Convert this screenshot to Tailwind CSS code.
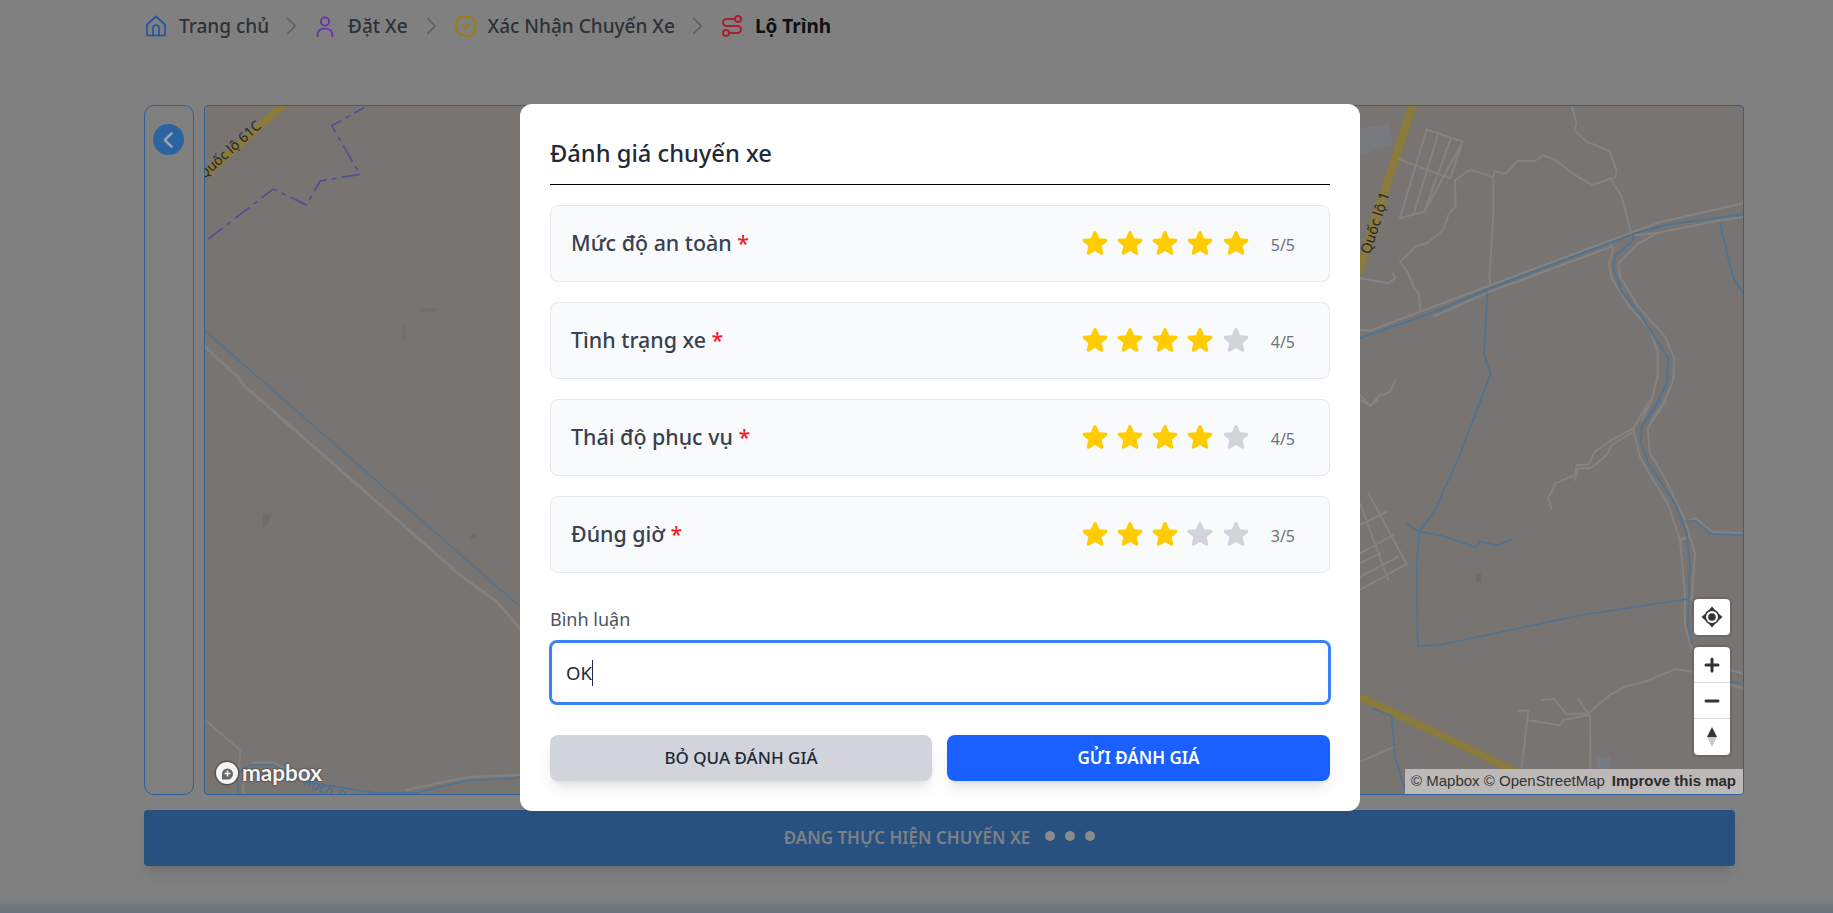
<!DOCTYPE html>
<html lang="en">

<head>
    <meta charset="UTF-8">
    <meta name="viewport" content="width=device-width, initial-scale=1.0">
    <title>Đánh giá chuyến xe</title>
    <script src="https://cdn.jsdelivr.net/npm/@tailwindcss/browser@4"></script>
</head>

<body class="bg-[#808080] font-['Noto_Sans',sans-serif] overflow-hidden">
    <svg class="hidden"><symbol id="star" viewBox="0 0 24 24"><path fill="currentColor" d="M10.788 3.21c.448-1.077 1.976-1.077 2.424 0l2.082 5.006 5.404.434c1.164.093 1.636 1.545.749 2.305l-4.117 3.527 1.257 5.273c.271 1.136-.964 2.033-1.96 1.425L12 18.354 7.373 21.18c-.996.608-2.231-.29-1.96-1.425l1.257-5.273-4.117-3.527c-.887-.76-.415-2.212.749-2.305l5.404-.434 2.082-5.005Z" /></symbol></svg>

    <div class="relative w-[1833px] h-[913px] pl-[144px] overflow-hidden">

        <!-- Breadcrumb -->
        <nav class="flex items-center h-[52px] text-[19px] text-[#2d3137] font-medium">
            <svg class="w-[24px] h-[24px] text-[#1f55a6]" viewBox="0 0 24 24" fill="none" stroke="currentColor" stroke-width="1.7" stroke-linejoin="round" stroke-linecap="round"><path d="M3 10.500 12 2.500l9 8V21.500H3z" /><path d="M9 21.500V14a3 3 0 0 1 6 0v7.500" /></svg>
            <span class="ml-[11px]">Trang chủ</span>
            <svg class="w-[20px] h-[20px] ml-[12px] mr-[13px] text-[#5a5d62]" viewBox="0 0 24 24" fill="none" stroke="currentColor" stroke-width="1.8" stroke-linecap="round" stroke-linejoin="round"><path d="m8 3 9 9-9 9" /></svg>
            <svg class="w-[22px] h-[22px] text-[#6a2eab]" viewBox="0 0 24 24" fill="none" stroke="currentColor" stroke-width="1.9" stroke-linecap="round"><circle cx="12" cy="7" r="4.500" /><path d="M4 23v-2a6 6 0 0 1 6-6h4a6 6 0 0 1 6 6v2" /></svg>
            <span class="ml-[12px]">Đặt Xe</span>
            <svg class="w-[20px] h-[20px] ml-[13px] mr-[13px] text-[#5a5d62]" viewBox="0 0 24 24" fill="none" stroke="currentColor" stroke-width="1.8" stroke-linecap="round" stroke-linejoin="round"><path d="m8 3 9 9-9 9" /></svg>
            <svg class="w-[24px] h-[24px] text-[#a57c00]" viewBox="0 0 24 24" fill="none" stroke="currentColor" stroke-width="1.7" stroke-linecap="round" stroke-linejoin="round"><path d="M12 2l2.600 1.300 2.900-.300 1.500 2.500 2.500 1.500-.300 2.900L22 12.500l-1.300 2.500.300 2.900-2.500 1.500-1.500 2.500-2.900-.300L12 22l-2.600-1.300-2.900.300L5 18.500 2.500 17l.300-2.900L1.500 11.500l1.300-2.500-.300-2.900L5 4.600 6.500 2.200l2.900.300z" /><path d="m8.500 12 2.500 2.500 4.500-4.500" /></svg>
            <span class="ml-[10px]">Xác Nhận Chuyến Xe</span>
            <svg class="w-[20px] h-[20px] ml-[12px] mr-[3px] text-[#5a5d62]" viewBox="0 0 24 24" fill="none" stroke="currentColor" stroke-width="1.8" stroke-linecap="round" stroke-linejoin="round"><path d="m8 3 9 9-9 9" /></svg>
            <svg class="w-[24px] h-[24px] ml-[10px] text-[#a8212f]" viewBox="0 0 24 24" fill="none" stroke="currentColor" stroke-width="2" stroke-linecap="round" stroke-linejoin="round"><circle cx="6" cy="19" r="3" /><path d="M9 19h8.500a3.500 3.500 0 0 0 0-7h-11a3.500 3.500 0 0 1 0-7H15" /><circle cx="18" cy="5" r="3" /></svg>
            <span class="ml-[11px] font-bold text-[#0f1012]">Lộ Trình</span>
        </nav>

        <!-- Side panel + map -->
        <div class="flex gap-[10px] mt-[53px] h-[690px]">
            <div class="w-[50px] border border-[#2e5f96] rounded-[10px] pt-[18px] pl-[8px]">
                <button class="w-[31px] h-[31px] rounded-full bg-[#2b64a0] flex items-center justify-center">
                    <svg class="w-[20px] h-[20px] text-[#97a3ae]" viewBox="0 0 24 24" fill="none" stroke="currentColor" stroke-width="3" stroke-linecap="round" stroke-linejoin="round"><path d="m15 4-8 8 8 8" /></svg>
                </button>
            </div>

            <div class="relative w-[1540px] border border-[#2e5f96] rounded-[4px] bg-[#787472] overflow-hidden">
                <svg class="absolute left-[-1px] top-[-1px]" width="1540" height="690" viewBox="204 105 1540 690" fill="none" stroke-linejoin="round" stroke-linecap="round">
                    <!-- top left -->
                    <g transform="translate(140 95) scale(.3333)">
                        <path d="M435 25 190 245" stroke="#8a7a3c" stroke-width="24" stroke-linecap="butt" />
                        <path d="M205 432 400 282 500 330 540 258 660 238 575 92 672 38" stroke="#4f5190" stroke-width="5" stroke-dasharray="55 16 14 16" stroke-linecap="butt" />
                        <path d="M845 645h40M792 700v26" stroke="#716e6c" stroke-width="12" />
                    </g>
                    <text transform="translate(262 127) rotate(-42)" text-anchor="end" fill="#24272b" stroke="none" font-size="14" font-family="Noto Sans">Quốc lộ 61C</text>

                    <!-- left diagonal and bottom -->
                    <g transform="translate(200 300) scale(.3333)">
                        <path d="M15 140 95 215 115 230 125 250 780 825 890 905 960 985" stroke="#838180" stroke-width="9" />
                        <path d="M15 92 960 920" stroke="#4f7391" stroke-width="3.500" />
                        <path d="M15 1260 120 1350 118 1400" stroke="#838180" stroke-width="6" />
                        <path d="M130 1480V1415L160 1388H220L310 1435M620 1470 800 1432 960 1425" stroke="#838180" stroke-width="7" />
                        <path d="M115 1480 112 1420 150 1395H220L310 1445 520 1478H650L800 1442 945 1435 960 1430" stroke="#4f7391" stroke-width="5" />
                        <path d="M190 640 212 645 205 672 187 680z" fill="#6e6b69" />
                        <path d="M820 700l10 14h-20z" fill="#6e6b69" />
                    </g>
                    <text transform="translate(303 785) rotate(22)" fill="#4a7190" stroke="none" font-size="14" font-style="italic" font-family="Noto Sans">Rạch Ba Lai</text>

                    <!-- right upper -->
                    <g transform="translate(1355 100) scale(.3333)">
                        <path d="M15 85 105 72 112 135 15 165z" fill="#797a7f" />
                        <path d="M172 15 10 520" stroke="#8a7a3c" stroke-width="26" stroke-linecap="butt" />
                        <g stroke="#858382" stroke-width="6">
                            <path d="M215 88 323 125 285 235 133 178M215 88 135 355 208 335 323 125M250 100 175 345M288 113 208 335" />
                            <path d="M300 240 345 210 375 218 415 232 420 213 452 222 488 183H540L565 166 600 180 660 225 712 255 780 232 785 212 765 155 745 145 695 125 658 90 665 70 650 18" />
                            <path d="M300 240 302 318 280 345 265 390 215 430 185 438 135 485 160 520 175 560 190 578 197 635" />
                            <path d="M415 232V350L403 530 405 555M765 235 800 290 827 393" />
                            <path d="M15 690 45 692 400 558 770 420 920 365 1165 310" />
                            <path d="M240 648 400 577 770 440M835 405H850L910 398 1090 362 1165 352" />
                            <path d="M765 425 775 450 762 490 770 535 820 615 885 690 908 755V830L890 900 860 960" />
                            <path d="M910 398 850 430 790 490 795 530 850 620 930 710 958 775 955 840 925 910 890 960" />
                            <path d="M15 535 100 550 120 535 115 520M120 842 105 875 85 885 78 882 45 918 15 885" />
                        </g>
                        <g stroke="#4f7391" stroke-width="6">
                            <path d="M15 715 240 635 400 567 840 400 930 375 1165 343" />
                            <path d="M835 405V420L780 468 775 505 800 575 860 650 940 775 935 850 905 910 875 960" />
                            <path d="M397 580 387 765 407 820 355 960M1095 370 1135 535 1165 580" />
                        </g>
                    </g>
                    <text transform="translate(1370 255) rotate(-72)" fill="#24272b" stroke="none" font-size="14.500" font-family="Noto Sans">Quốc lộ 1</text>

                    <!-- right lower -->
                    <g transform="translate(1355 400) scale(.3333)">
                        <g stroke="#858382" stroke-width="6">
                            <path d="M885 0 835 85 855 170 880 215 940 315 975 420 990 580V680L1010 745" />
                            <path d="M935 0 878 85 885 160 930 235 990 360 1020 460 1010 600" />
                            <path d="M835 85 770 120 720 155 700 195H665L660 225 600 250 592 270 580 295 590 328" />
                            <path d="M835 95 770 135 755 165 720 195 705 205H670L660 240M975 420 1000 410" />
                            <path d="M40 280 155 492 15 570M15 310 100 540M15 375 95 335M15 460 115 405M15 490 75 460M15 530 130 470" />
                            <path d="M15 0 45 18 70 0M1125 810 1165 822M1125 855 1165 865M995 365 1020 355 1070 395 1165 400" />
                        </g>
                        <g stroke="#4f7391" stroke-width="5">
                            <path d="M378 0 310 175 235 340 193 393 185 490 188 738 255 735 680 645 1000 597" />
                            <path d="M155 372 193 395 262 408 362 442 375 425 430 436 470 417" />
                            <path d="M915 0 860 80 858 130 880 190 960 310 995 400 1005 490 998 670 1010 730" />
                            <path d="M995 365 1020 362 1070 402 1165 405M1125 845 1165 852" />
                        </g>
                        <path d="M364 520h14v28h-14z" fill="#6e6b69" />
                    </g>

                    <!-- bottom right -->
                    <g transform="translate(1350 580) scale(.3333)">
                        <path d="M30 350 530 590 680 640" stroke="#8a7a3c" stroke-width="22" stroke-linecap="butt" />
                        <g stroke="#858382" stroke-width="6">
                            <path d="M575 360 612 357 650 403 715 400 780 345 820 322 890 303 975 268 1030 275" />
                            <path d="M685 358 720 408 722 640M505 392H535L532 420 630 436 640 420 715 405M532 420 515 560M30 545 135 500" />
                        </g>
                        <path d="M70 385 125 408 135 530 165 630" stroke="#4f7391" stroke-width="5" />
                        <path d="M740 530h40v40h-40z" fill="#777a84" />
                    </g>
                </svg>

                <!-- Mapbox logo -->
                <div class="absolute left-[9px] bottom-[8px] flex items-center">
                    <svg class="w-[26px] h-[26px]" viewBox="0 0 26 26"><circle cx="13" cy="13" r="12.500" fill="#555" /><circle cx="13" cy="13" r="11" fill="#f4f4f4" /><path d="M8 14a5.500 5.500 0 1 1 5.500 5.500H8z" fill="#666" /><path d="M13.500 10.500v6M10.500 13.500h6" stroke="#f4f4f4" stroke-width="1.600" /></svg>
                    <span class="ml-[2px] font-['Lato',sans-serif] font-bold text-[22.500px] leading-none text-[#f4f4f4] [text-shadow:0_0_2px_#444,0_0_2px_#444,0_0_1px_#444]">mapbox</span>
                </div>

                <!-- Map controls -->
                <div class="absolute right-[13px] top-[493px] flex flex-col gap-[12px] text-[#333]">
                    <button class="w-[36px] h-[36px] bg-white rounded-[4px] shadow-[0_0_0_2px_rgba(0,0,0,0.1)] flex items-center justify-center">
                        <svg class="w-[24px] h-[24px]" viewBox="0 0 24 24" fill="none"><path d="M12 1.500 15 5a7.500 7.500 0 0 1 4 4l3.500 3L19 15a7.500 7.500 0 0 1-4 4l-3 3.500L9 19a7.500 7.500 0 0 1-4-4L1.500 12 5 9a7.500 7.500 0 0 1 4-4z" fill="#333" /><circle cx="12" cy="12" r="6" fill="#fff" /><circle cx="12" cy="12" r="3.800" fill="#333" /></svg>
                    </button>
                    <div class="w-[36px] bg-white rounded-[4px] shadow-[0_0_0_2px_rgba(0,0,0,0.1)] flex flex-col divide-y divide-[#ddd]">
                        <div class="h-[36px] flex items-center justify-center"><svg class="w-[16px] h-[16px]" viewBox="0 0 16 16"><path d="M8 2v12M2 8h12" stroke="#333" stroke-width="3" stroke-linecap="round" /></svg></div>
                        <div class="h-[36px] flex items-center justify-center"><svg class="w-[16px] h-[16px]" viewBox="0 0 16 16"><path d="M2 8h12" stroke="#333" stroke-width="3" stroke-linecap="round" /></svg></div>
                        <div class="h-[36px] flex items-center justify-center"><svg class="w-[12px] h-[24px]" viewBox="0 0 12 24"><path d="M6 2 11 12H1z" fill="#333" /><path d="M6 22 11 12H1z" fill="#ccc" /></svg></div>
                    </div>
                </div>

                <!-- Attribution -->
                <div class="absolute right-0 bottom-0 h-[25px] w-[338px] bg-[#bcb9b8] flex items-center justify-between pl-[6px] pr-[7px] font-['Liberation_Sans',sans-serif] text-[15px] text-[#333]">
                    <span>© Mapbox © OpenStreetMap</span>
                    <span class="font-bold text-[#2b2b2b]">Improve this map</span>
                </div>
            </div>
        </div>

        <!-- Status bar -->
        <div class="flex items-center justify-center gap-[15px] w-[1591px] h-[56px] mt-[15px] rounded-[4px] bg-[#285180] shadow-lg">
            <span class="text-[17px] font-semibold text-[#7c8187]">ĐANG THỰC HIỆN CHUYẾN XE</span>
            <div class="flex gap-[10px] -translate-y-[2px]">
                <span class="w-[10px] h-[10px] rounded-full bg-[#8a8a8a]"></span>
                <span class="w-[10px] h-[10px] rounded-full bg-[#8a8a8a]"></span>
                <span class="w-[10px] h-[10px] rounded-full bg-[#8a8a8a]"></span>
            </div>
        </div>

        <!-- Bottom fade -->
        <div class="absolute left-0 right-0 bottom-0 h-[16px] bg-gradient-to-b from-[#808080] to-[#697280]"></div>

        <!-- Rating modal -->
        <div class="absolute left-[520px] top-[104px] w-[840px] h-[707px] bg-white rounded-[12px] px-[30px] text-[#1f2937]">
            <h2 class="h-[81px] pt-[29px] border-b border-black text-[23.700px] leading-[40px] font-medium">Đánh giá chuyến xe</h2>

            <div class="mt-[20px] flex flex-col gap-[20px]">
                <div class="flex items-center h-[77px] pl-[20px] pr-[34px] bg-[#f9fafb] border border-[#e5e7eb] rounded-[8px]">
                    <span class="text-[21.400px] font-medium text-[#374151]">Mức độ an toàn <span class="text-[#ef1c2e]">*</span></span>
                    <div class="ml-auto flex gap-[5.300px] -translate-y-[1px] text-[#ffcc00]">
                        <svg class="w-[30px] h-[30px]"><use href="#star" /></svg>
                        <svg class="w-[30px] h-[30px]"><use href="#star" /></svg>
                        <svg class="w-[30px] h-[30px]"><use href="#star" /></svg>
                        <svg class="w-[30px] h-[30px]"><use href="#star" /></svg>
                        <svg class="w-[30px] h-[30px]"><use href="#star" /></svg>
                    </div>
                    <span class="ml-[20px] translate-y-[1px] text-[16px] text-[#6b7280]">5/5</span>
                </div>

                <div class="flex items-center h-[77px] pl-[20px] pr-[34px] bg-[#f9fafb] border border-[#e5e7eb] rounded-[8px]">
                    <span class="text-[21.400px] font-medium text-[#374151]">Tình trạng xe <span class="text-[#ef1c2e]">*</span></span>
                    <div class="ml-auto flex gap-[5.300px] -translate-y-[1px] text-[#ffcc00]">
                        <svg class="w-[30px] h-[30px]"><use href="#star" /></svg>
                        <svg class="w-[30px] h-[30px]"><use href="#star" /></svg>
                        <svg class="w-[30px] h-[30px]"><use href="#star" /></svg>
                        <svg class="w-[30px] h-[30px]"><use href="#star" /></svg>
                        <svg class="w-[30px] h-[30px] text-[#d1d5db]"><use href="#star" /></svg>
                    </div>
                    <span class="ml-[20px] translate-y-[1px] text-[16px] text-[#6b7280]">4/5</span>
                </div>

                <div class="flex items-center h-[77px] pl-[20px] pr-[34px] bg-[#f9fafb] border border-[#e5e7eb] rounded-[8px]">
                    <span class="text-[21.400px] font-medium text-[#374151]">Thái độ phục vụ <span class="text-[#ef1c2e]">*</span></span>
                    <div class="ml-auto flex gap-[5.300px] -translate-y-[1px] text-[#ffcc00]">
                        <svg class="w-[30px] h-[30px]"><use href="#star" /></svg>
                        <svg class="w-[30px] h-[30px]"><use href="#star" /></svg>
                        <svg class="w-[30px] h-[30px]"><use href="#star" /></svg>
                        <svg class="w-[30px] h-[30px]"><use href="#star" /></svg>
                        <svg class="w-[30px] h-[30px] text-[#d1d5db]"><use href="#star" /></svg>
                    </div>
                    <span class="ml-[20px] translate-y-[1px] text-[16px] text-[#6b7280]">4/5</span>
                </div>

                <div class="flex items-center h-[77px] pl-[20px] pr-[34px] bg-[#f9fafb] border border-[#e5e7eb] rounded-[8px]">
                    <span class="text-[21.400px] font-medium text-[#374151]">Đúng giờ <span class="text-[#ef1c2e]">*</span></span>
                    <div class="ml-auto flex gap-[5.300px] -translate-y-[1px] text-[#ffcc00]">
                        <svg class="w-[30px] h-[30px]"><use href="#star" /></svg>
                        <svg class="w-[30px] h-[30px]"><use href="#star" /></svg>
                        <svg class="w-[30px] h-[30px]"><use href="#star" /></svg>
                        <svg class="w-[30px] h-[30px] text-[#d1d5db]"><use href="#star" /></svg>
                        <svg class="w-[30px] h-[30px] text-[#d1d5db]"><use href="#star" /></svg>
                    </div>
                    <span class="ml-[20px] translate-y-[1px] text-[16px] text-[#6b7280]">3/5</span>
                </div>
            </div>

            <label class="block mt-[32px] text-[18px] leading-[28px] text-[#4b5563]">Bình luận</label>

            <div class="-mx-[1px] mt-[7px] h-[65px] flex items-center pl-[14px] border-[3px] border-[#3b82f6] rounded-[8px] text-[18.500px] text-[#1f2937]">
                <span>OK</span><span class="w-[1px] h-[26px] bg-[#1f2937]"></span>
            </div>

            <div class="mt-[30px] flex gap-[15px]">
                <button class="w-[382px] h-[46px] rounded-[8px] bg-[#d1d5db] text-[17px] font-medium text-[#1f2937] shadow-lg">BỎ QUA ĐÁNH GIÁ</button>
                <button class="w-[383px] h-[46px] rounded-[8px] bg-[#1a5fff] text-[17px] font-semibold text-white shadow-lg">GỬI ĐÁNH GIÁ</button>
            </div>
        </div>
    </div>
</body>

</html>
